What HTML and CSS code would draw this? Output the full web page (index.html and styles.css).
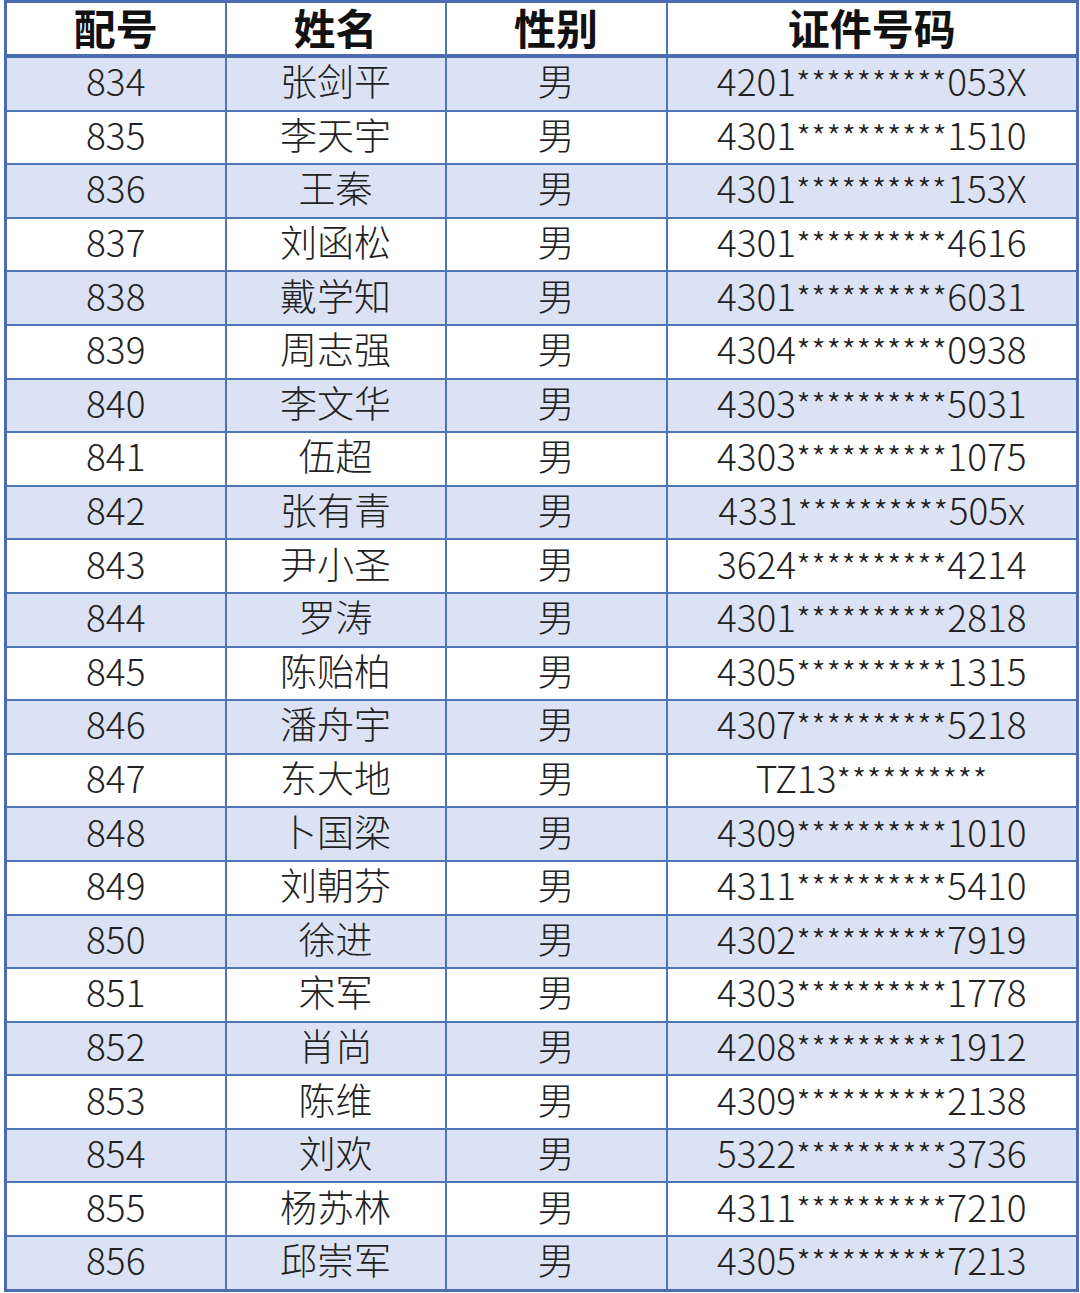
FILE: index.html
```html
<!DOCTYPE html>
<html lang="zh">
<head>
<meta charset="utf-8">
<title>名单</title>
<link rel="stylesheet" href="styles.css">
</head>
<body>
<table class="roster">
  <colgroup>
    <col class="c-no"><col class="c-name"><col class="c-sex"><col class="c-id">
  </colgroup>
  <thead>
    <tr><th>配号</th><th>姓名</th><th>性别</th><th>证件号码</th></tr>
  </thead>
  <tbody>
    <tr><td>834</td><td>张剑平</td><td>男</td><td>4201<span class="ast">**********</span>053X</td></tr>
    <tr><td>835</td><td>李天宇</td><td>男</td><td>4301<span class="ast">**********</span>1510</td></tr>
    <tr><td>836</td><td>王秦</td><td>男</td><td>4301<span class="ast">**********</span>153X</td></tr>
    <tr><td>837</td><td>刘函松</td><td>男</td><td>4301<span class="ast">**********</span>4616</td></tr>
    <tr><td>838</td><td>戴学知</td><td>男</td><td>4301<span class="ast">**********</span>6031</td></tr>
    <tr><td>839</td><td>周志强</td><td>男</td><td>4304<span class="ast">**********</span>0938</td></tr>
    <tr><td>840</td><td>李文华</td><td>男</td><td>4303<span class="ast">**********</span>5031</td></tr>
    <tr><td>841</td><td>伍超</td><td>男</td><td>4303<span class="ast">**********</span>1075</td></tr>
    <tr><td>842</td><td>张有青</td><td>男</td><td>4331<span class="ast">**********</span>505x</td></tr>
    <tr><td>843</td><td>尹小圣</td><td>男</td><td>3624<span class="ast">**********</span>4214</td></tr>
    <tr><td>844</td><td>罗涛</td><td>男</td><td>4301<span class="ast">**********</span>2818</td></tr>
    <tr><td>845</td><td>陈贻柏</td><td>男</td><td>4305<span class="ast">**********</span>1315</td></tr>
    <tr><td>846</td><td>潘舟宇</td><td>男</td><td>4307<span class="ast">**********</span>5218</td></tr>
    <tr><td>847</td><td>东大地</td><td>男</td><td>TZ13<span class="ast">**********</span></td></tr>
    <tr><td>848</td><td>卜国梁</td><td>男</td><td>4309<span class="ast">**********</span>1010</td></tr>
    <tr><td>849</td><td>刘朝芬</td><td>男</td><td>4311<span class="ast">**********</span>5410</td></tr>
    <tr><td>850</td><td>徐进</td><td>男</td><td>4302<span class="ast">**********</span>7919</td></tr>
    <tr><td>851</td><td>宋军</td><td>男</td><td>4303<span class="ast">**********</span>1778</td></tr>
    <tr><td>852</td><td>肖尚</td><td>男</td><td>4208<span class="ast">**********</span>1912</td></tr>
    <tr><td>853</td><td>陈维</td><td>男</td><td>4309<span class="ast">**********</span>2138</td></tr>
    <tr><td>854</td><td>刘欢</td><td>男</td><td>5322<span class="ast">**********</span>3736</td></tr>
    <tr><td>855</td><td>杨苏林</td><td>男</td><td>4311<span class="ast">**********</span>7210</td></tr>
    <tr><td>856</td><td>邱崇军</td><td>男</td><td>4305<span class="ast">**********</span>7213</td></tr>
  </tbody>
</table>
</body>
</html>
```

FILE: styles.css
```css
html, body {
  margin: 0;
  padding: 0;
  background: #ffffff;
}

body {
  font-family: "Noto Sans CJK SC", "Noto Sans", sans-serif;
  color: #1e1e1e;
}

.roster {
  margin: 0 0 0 4px;
  width: 1072px;
  border-collapse: collapse;
  table-layout: fixed;
  border: 3px solid #4a6db0;
}

.c-no { width: 220px; }
.c-name { width: 220px; }
.c-sex { width: 221px; }
.c-id { width: 411px; }

.roster th,
.roster td {
  border: 2px solid #4f74b8;
  text-align: center;
  vertical-align: middle;
  white-space: nowrap;
}

.roster th {
  height: 47px;
  padding: 0 0 4px 0;
  font-size: 42px;
  font-weight: 700;
  color: #111111;
  line-height: 1;
  border-bottom: 4px solid #4a6db0;
}

.roster td {
  height: 45.6px;
  padding: 0 0 6px 0;
  font-size: 37px;
  line-height: 1;
  font-weight: 300;
  color: #222222;
}

.roster tbody tr:nth-child(odd) td {
  background: #dbe2f3;
}

.roster tbody tr:nth-child(even) td {
  background: #ffffff;
}

.ast {
  font-size: 33px;
  letter-spacing: 0.5px;
}
```
